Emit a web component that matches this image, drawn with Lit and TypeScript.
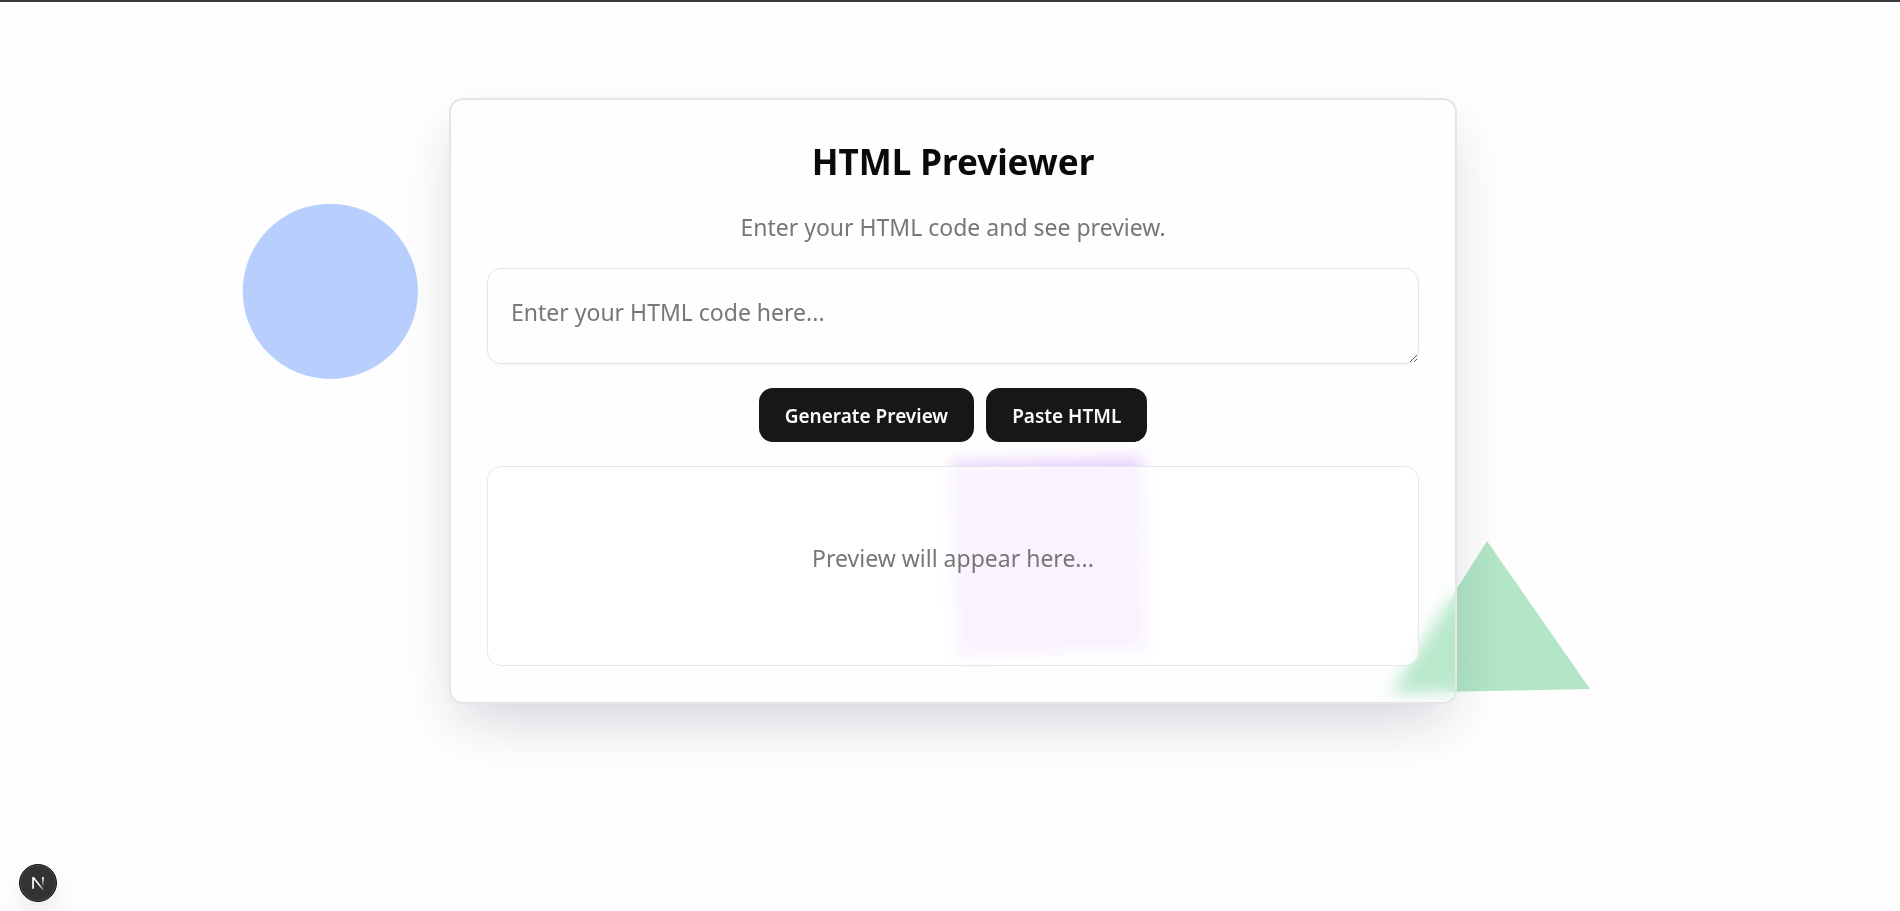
import { LitElement, html, css } from "lit";
import { customElement, state } from "lit/decorators.js";

@customElement("app-root")
export class AppRoot extends LitElement {
  @state() private code = "";
  @state() private preview = "";

  static styles = css`
    :host {
      display: block;
      position: relative;
      min-height: 100vh;
      box-sizing: border-box;
      overflow: hidden;
      background: #fefefe;
      border-top: 2px solid #3d393c;
      color: #0a0a0a;
      font-family: "Segoe UI", "Noto Sans", "Open Sans", sans-serif;
      font-size: 23px;
      line-height: 32px;
    }
    * {
      box-sizing: border-box;
    }
    .shapes {
      position: absolute;
      inset: 0;
      width: 100%;
      height: 909px;
      pointer-events: none;
    }
    main {
      padding: 96px 18px 36px 24px;
    }
    .card {
      position: relative;
      display: flex;
      flex-direction: column;
      gap: 24px;
      max-width: 1008px;
      margin: 0 auto;
      padding: 36px;
      border: 2px solid #e5e5e5;
      border-radius: 14px;
      background: rgba(255, 255, 255, 0.1);
      backdrop-filter: blur(8px);
      box-shadow: 0 24px 58px -11px rgba(20, 30, 60, 0.2);
    }
    header {
      display: flex;
      flex-direction: column;
      gap: 24px;
      text-align: center;
    }
    h1 {
      margin: 0;
      font-size: 35px;
      line-height: 52px;
      font-weight: 700;
    }
    p {
      margin: 0;
      color: #777;
    }
    header p {
      line-height: 30px;
      padding-bottom: 2px;
    }
    textarea {
      display: block;
      width: 100%;
      height: 96px;
      padding: 27px 23px;
      border: 1px solid #e5e5e5;
      border-radius: 14px;
      background: transparent;
      box-shadow: 0 1px 2px rgba(0, 0, 0, 0.05);
      color: inherit;
      font: inherit;
      resize: vertical;
      outline: none;
    }
    textarea::placeholder {
      color: #777;
      opacity: 1;
    }
    .actions {
      display: flex;
      flex-wrap: wrap;
      justify-content: center;
      gap: 12px;
    }
    button {
      height: 54px;
      padding: 2px 26px 0;
      border: 0;
      border-radius: 14px;
      background: #171717;
      color: #fafafa;
      font: inherit;
      font-size: 19px;
      font-weight: 600;
      cursor: pointer;
    }
    .preview {
      display: grid;
      place-items: center;
      min-height: 200px;
      padding: 24px;
      border: 1px solid #e5e7eb;
      border-radius: 14px;
      background: rgba(255, 255, 255, 0.75);
    }
    .preview p {
      padding-bottom: 16px;
    }
    iframe {
      width: 100%;
      border: 0;
    }
    .badge {
      position: absolute;
      left: 19px;
      bottom: 9px;
      display: grid;
      place-items: center;
      width: 38px;
      height: 38px;
      padding: 0;
      border: 1px solid #171717;
      border-radius: 50%;
      background: #333;
      box-shadow: inset 0 0 0 1px #4b4b4b, 0 16px 32px -8px rgba(0, 0, 0, 0.24);
    }
  `;

  private async paste() {
    this.code = await navigator.clipboard.readText();
  }

  render() {
    return html`
      <svg class="shapes" viewBox="0 0 1900 909" preserveAspectRatio="xMidYMin slice" aria-hidden="true">
        <circle cx="330.3" cy="289.3" r="87.6" fill="#b8cffe" />
        <rect x="954" y="459" width="191" height="192" fill="#e4c6fd" transform="rotate(-1.6 1050 555)" />
        <polygon points="1487,539 1590,687 1391,691" fill="#b2e6c6" />
      </svg>
      <main>
        <section class="card">
          <header>
            <h1>HTML Previewer</h1>
            <p>Enter your HTML code and see preview.</p>
          </header>
          <textarea
            aria-label="HTML code"
            placeholder="Enter your HTML code here..."
            .value=${this.code}
            @input=${(e: Event) => (this.code = (e.target as HTMLTextAreaElement).value)}
          ></textarea>
          <div class="actions">
            <button type="button" @click=${() => (this.preview = this.code)}>Generate Preview</button>
            <button type="button" @click=${this.paste}>Paste HTML</button>
          </div>
          <div class="preview">
            ${this.preview
              ? html`<iframe title="Preview" sandbox="" .srcdoc=${this.preview}></iframe>`
              : html`<p>Preview will appear here...</p>`}
          </div>
        </section>
      </main>
      <button class="badge" type="button" aria-label="Open developer tools">
        <svg width="14" height="14" viewBox="0 0 14 14" fill="none" aria-hidden="true">
          <defs>
            <linearGradient id="stem" x1="0" y1="1" x2="0" y2="13" gradientUnits="userSpaceOnUse">
              <stop stop-color="#fff" />
              <stop offset="0.8" stop-color="#fff" stop-opacity="0" />
            </linearGradient>
            <linearGradient id="slash" x1="2" y1="1" x2="12" y2="14" gradientUnits="userSpaceOnUse">
              <stop offset="0.6" stop-color="#fff" />
              <stop offset="1" stop-color="#fff" stop-opacity="0.3" />
            </linearGradient>
          </defs>
          <path d="M1.2 12.8V1H3L12.8 13.4L11.4 14L2.9 3.6V12.8Z" fill="url(#slash)" />
          <rect x="11" y="1" width="1.8" height="11.5" fill="url(#stem)" />
        </svg>
      </button>
    `;
  }
}
